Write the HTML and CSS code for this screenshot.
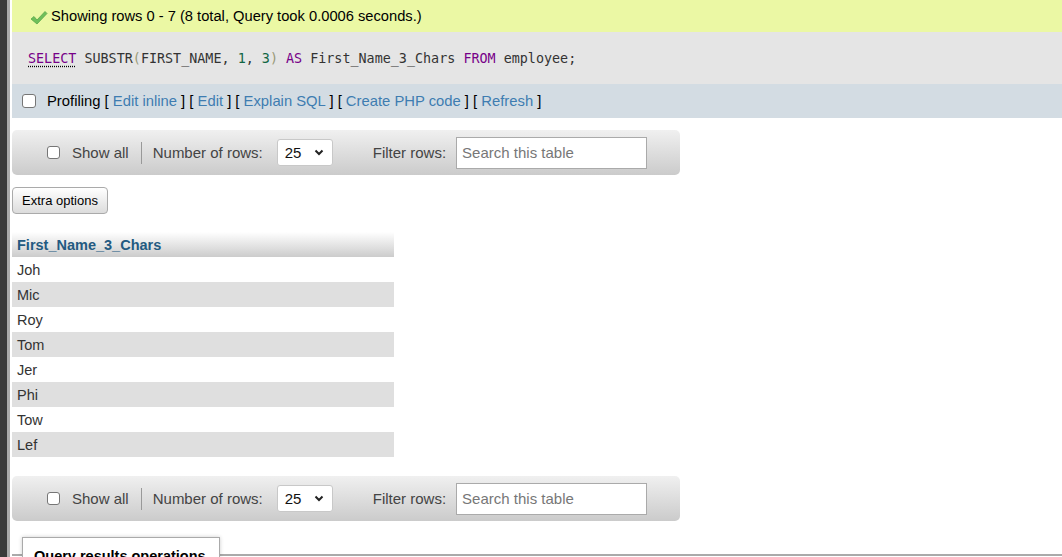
FILE: index.html
```html
<!DOCTYPE html>
<html>
<head>
<meta charset="utf-8">
<link rel="stylesheet" href="styles.css">
</head>
<body>
<div class="frame">
  <div class="rail"></div>
  <div class="main">
    <div class="success">
      <svg class="check" width="18" height="16" viewBox="0 0 18 16"><path d="M1 9 L4 6.5 L7 10 L15 1.5 L17 3.5 L7 14 Z" fill="#6fbf5a" stroke="#5aa84a" stroke-width="0.8" stroke-linejoin="round"/></svg>
      <span>Showing rows 0 - 7 (8 total, Query took 0.0006 seconds.)</span>
    </div>
    <div class="sql">
      <code><span class="kw kw-u">SELECT</span> <span class="fn">SUBSTR</span><span class="br">(</span>FIRST_NAME, <span class="num">1</span>, <span class="num">3</span><span class="br">)</span> <span class="kw">AS</span> First_Name_3_Chars <span class="kw">FROM</span> employee;</code>
    </div>
    <div class="profiling">
      <span class="cb"></span>
      <span>Profiling [ <a>Edit inline</a> ] [ <a>Edit</a> ] [ <a>Explain SQL</a> ] [ <a>Create PHP code</a> ] [ <a>Refresh</a> ]</span>
    </div>

    <div class="navbar nav-top">
      <span class="cb small"></span>
      <span class="lbl">Show all</span>
      <span class="sep"></span>
      <span class="lbl rows">Number of rows:</span>
      <span class="select">25 <svg width="10" height="7" viewBox="0 0 10 7"><path d="M1.5 1.5 L5 5 L8.5 1.5" fill="none" stroke="#222" stroke-width="2"/></svg></span>
      <span class="lbl filter">Filter rows:</span>
      <span class="search">Search this table</span>
    </div>

    <div class="btn">Extra options</div>

    <table class="results">
      <thead><tr><th>First_Name_3_Chars</th></tr></thead>
      <tbody>
        <tr><td>Joh</td></tr>
        <tr><td>Mic</td></tr>
        <tr><td>Roy</td></tr>
        <tr><td>Tom</td></tr>
        <tr><td>Jer</td></tr>
        <tr><td>Phi</td></tr>
        <tr><td>Tow</td></tr>
        <tr><td>Lef</td></tr>
      </tbody>
    </table>

    <div class="navbar nav-bottom">
      <span class="cb small"></span>
      <span class="lbl">Show all</span>
      <span class="sep"></span>
      <span class="lbl rows">Number of rows:</span>
      <span class="select">25 <svg width="10" height="7" viewBox="0 0 10 7"><path d="M1.5 1.5 L5 5 L8.5 1.5" fill="none" stroke="#222" stroke-width="2"/></svg></span>
      <span class="lbl filter">Filter rows:</span>
      <span class="search">Search this table</span>
    </div>

    <div class="ops">
      <div class="ops-tab">Query results operations</div>
    </div>
  </div>
</div>
</body>
</html>
```
FILE: styles.css
```css
* { box-sizing: border-box; }
html, body { margin: 0; padding: 0; background: #fff; }
body {
  font-family: "Liberation Sans", Arial, sans-serif;
  font-size: 14px;
  color: #000;
  width: 1062px;
  height: 557px;
  overflow: hidden;
}
.frame { display: flex; height: 557px; overflow: hidden; }
.rail {
  width: 12px;
  flex: none;
  background: linear-gradient(to right, #3a3a3a 0, #3a3a3a 7px, #a9a9a9 7px, #a9a9a9 10px, #fff 10px);
}
.main { flex: 1; min-width: 0; }

.success {
  height: 32px;
  background: #ebf8a4;
  display: flex;
  align-items: center;
  padding-left: 18px;
  gap: 3px;
  font-size: 14.7px;
  color: #000;
}
.check { margin-top: 3px; }

.sql {
  height: 52px;
  background: #e5e5e5;
  display: flex;
  align-items: center;
  padding-left: 16px;
}
.sql code {
  font-family: "DejaVu Sans Mono", monospace;
  font-size: 13.4px;
  color: #333;
}
.kw { color: #770088; }
.kw-u { text-decoration: underline dotted #000; text-underline-offset: 3px; }
.fn { color: #333; }
.br { color: #999977; }
.num { color: #116644; }

.profiling {
  height: 34px;
  background: #d3dce3;
  display: flex;
  align-items: center;
  padding-left: 10px;
  gap: 11px;
  font-size: 14.8px;
}
.profiling a { color: #3e7cb1; }

.cb {
  width: 14px;
  height: 14px;
  border: 1px solid #767676;
  border-radius: 3px;
  background: #fff;
  flex: none;
}
.cb.small { width: 13px; height: 13px; }

.navbar {
  width: 668px;
  height: 45px;
  border-radius: 5px;
  background: linear-gradient(#f0f0f0, #cbcbcb);
  display: flex;
  align-items: center;
  padding-left: 35px;
  color: #444;
  font-size: 15px;
}
.nav-top { margin-top: 12px; }
.nav-bottom { margin-top: 19px; }
.navbar .lbl { margin-left: 12px; }
.navbar .lbl.rows { margin-left: 11px; }
.sep {
  width: 1px;
  height: 22px;
  background: #999;
  margin-left: 12px;
}
.select {
  margin-left: 14px;
  width: 56px;
  height: 27px;
  background: #fff;
  border: 1px solid #c8c8c8;
  border-radius: 3px;
  display: flex;
  align-items: center;
  justify-content: space-between;
  padding: 0 8px 0 7px;
  color: #111;
  font-size: 15px;
}
.lbl.filter { margin-left: 40px; }
.search {
  margin-left: 10px;
  width: 191px;
  height: 32px;
  background: #fff;
  border: 1px solid #aaa;
  display: flex;
  align-items: center;
  padding-left: 5px;
  color: #777;
  font-size: 15px;
}

.btn {
  margin-top: 12px;
  width: 96px;
  height: 27px;
  border: 1px solid #aaa;
  border-radius: 4px;
  background: linear-gradient(#fff, #dcdcdc);
  display: flex;
  align-items: center;
  justify-content: center;
  font-size: 13px;
  color: #000;
}

.results {
  margin-top: 18px;
  border-collapse: collapse;
  width: 382px;
}
.results th {
  text-align: left;
  height: 25px;
  padding: 0 5px;
  font-weight: bold;
  color: #235a81;
  font-size: 14.5px;
  background: linear-gradient(#fff, #cccccc);
}
.results td {
  height: 25px;
  padding: 0 5px;
  color: #333;
  font-size: 14.5px;
}
.results tbody tr:nth-child(even) td { background: #dfdfdf; }

.ops {
  margin-top: 33px;
  height: 1px;
  position: relative;
  border-top: 2px solid #aaa;
}
.ops-tab {
  position: absolute;
  left: 10px;
  top: -19px;
  width: 198px;
  height: 20px;
  overflow: hidden;
  background: #fff;
  border: 1px solid #aaa;
  border-bottom: none;
  box-shadow: 0 0 4px rgba(0,0,0,0.2);
  padding: 10px 0 0 11px;
  font-weight: bold;
  font-size: 14.5px;
  line-height: 17px;
  color: #000;
}
```
